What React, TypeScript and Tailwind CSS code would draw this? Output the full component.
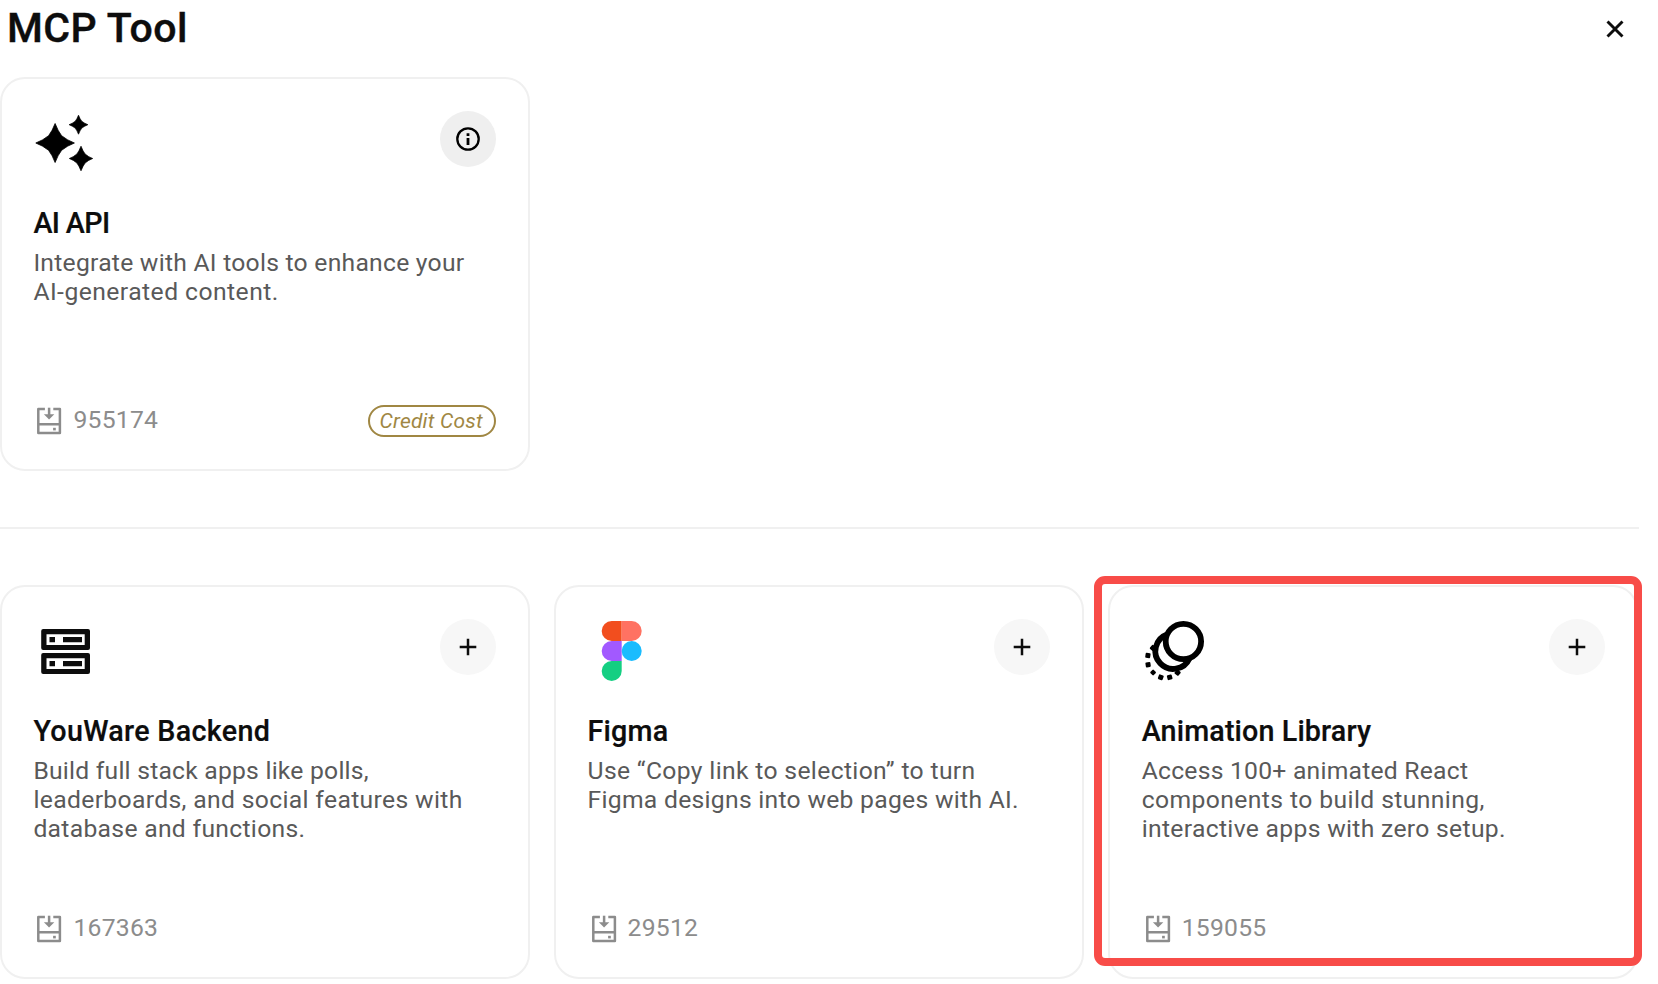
import type { ReactNode } from "react";

function SparklesIcon() {
  return (
    <svg width="64" height="64" viewBox="0 0 64 64" fill="#000">
      <g transform="translate(-0.300 0)">
        <path d="M22.400 11.500Q25.200 19 28.900 23.700Q34.500 28.300 41.700 31Q34.500 33.700 28.900 38.300Q25.200 43 22.400 50.500Q19.600 43 15.900 38.300Q10.300 33.700 3.100 31Q10.300 28.300 15.900 23.700Q19.600 19 22.400 11.500Z" strokeWidth="0.800" stroke="#000" />
        <path d="M45.800 3.200Q47.300 7 49.100 9.300Q51.800 11.400 55.200 12.700Q51.800 14 49.100 16.100Q47.300 18.400 45.800 22.200Q44.300 18.400 42.500 16.100Q39.800 14 36.400 12.700Q39.800 11.400 42.500 9.300Q44.300 7 45.800 3.200Z" strokeWidth="0.700" stroke="#000" />
        <path d="M48.300 34.200Q50.200 39 52.400 42Q55.700 44.900 60 46.500Q55.700 48.100 52.400 51Q50.200 54 48.300 58.800Q46.400 54 44.200 51Q40.900 48.100 36.600 46.500Q40.900 44.900 44.200 42Q46.400 39 48.300 34.200Z" strokeWidth="0.700" stroke="#000" />
      </g>
    </svg>
  );
}

function ServerIcon() {
  return (
    <svg width="64" height="64" viewBox="0 0 64 64" fill="#0d0d0d">
      <path fillRule="evenodd" d="M10.200 9H55a2 2 0 0 1 2 2V28a2 2 0 0 1-2 2H10.200a2 2 0 0 1-2-2V11a2 2 0 0 1 2-2ZM13.500 14.200V25H51.700V14.200Z" />
      <path fillRule="evenodd" d="M10.200 33H55a2 2 0 0 1 2 2V52a2 2 0 0 1-2 2H10.200a2 2 0 0 1-2-2V35a2 2 0 0 1 2-2ZM13.500 38.200V49H51.700V38.200Z" />
      <path d="M16.500 17H22V22.200H16.500ZM30 17H49V22.200H30ZM16.500 41H22V46.200H16.500ZM30 41H49V46.200H30Z" />
    </svg>
  );
}

function FigmaIcon() {
  return (
    <svg width="64" height="64" viewBox="0 0 64 64">
      <g transform="translate(1.200 0)">
        <path d="M22.500 1H32.500V21H22.500a10 10 0 0 1 0-20Z" fill="#F24E1E" />
        <path d="M32.500 1H42.500a10 10 0 0 1 0 20H32.500Z" fill="#FF7262" />
        <path d="M22.500 21H32.500V41H22.500a10 10 0 0 1 0-20Z" fill="#A259FF" />
        <circle cx="42.500" cy="31" r="10" fill="#1ABCFE" />
        <path d="M22.500 41H32.500V51a10 10 0 1 1-10-10Z" fill="#14CF82" />
      </g>
    </svg>
  );
}

function MotionIcon() {
  return (
    <svg width="64" height="64" viewBox="0 0 64 64" fill="none" stroke="#000">
      <g transform="translate(0.400 0)">
        <circle cx="41" cy="21.500" r="17.700" strokeWidth="5.800" />
        <path d="M24.500 14.500A17.800 17.800 0 1 0 47 38.500" strokeWidth="5.800" />
        <g fill="#000" stroke="none">
          <rect x="8" y="25.500" width="5" height="5" rx="1" transform="rotate(40 10.500 28)" />
          <rect x="3" y="33" width="5" height="5" rx="1" transform="rotate(8 5.500 35.500)" />
          <rect x="3.200" y="42.200" width="5" height="5" rx="1" transform="rotate(-8 5.700 44.700)" />
          <rect x="8.400" y="50.200" width="4.600" height="4.600" rx="1" transform="rotate(45 10.700 52.500)" />
          <rect x="15.900" y="54.800" width="5" height="5" rx="1" transform="rotate(20 18.400 57.300)" />
          <rect x="24.800" y="54.800" width="5" height="5" rx="1" transform="rotate(-15 27.300 57.300)" />
          <rect x="32.700" y="50.200" width="5" height="5" rx="1" transform="rotate(40 35.200 52.700)" />
        </g>
      </g>
    </svg>
  );
}

function InstallIcon() {
  return (
    <svg width="32" height="32" viewBox="0 0 32 32" fill="none" stroke="#8c8c8c" strokeWidth="2.500">
      <g transform="translate(-0.400 0)">
        <path d="M12.300 4.900H5.700V28.900H27.300V4.900H20.700M5.700 20.300H27.300" strokeLinejoin="round" />
        <path d="M16.500 3.700V11" />
        <path d="M11.300 10.200H21.700L16.500 15.500Z" fill="#8c8c8c" stroke="none" />
        <path d="M20.500 23.800H23.200V26.400H20.500Z" fill="#8c8c8c" stroke="none" />
      </g>
    </svg>
  );
}

function InfoIcon() {
  return (
    <svg width="28" height="28" viewBox="0 0 28 28" fill="none" stroke="#000">
      <circle cx="14" cy="14" r="10.700" strokeWidth="2.300" />
      <path d="M14 13V20M14 8.300V11" strokeWidth="2.800" />
    </svg>
  );
}

function PlusIcon() {
  return (
    <svg width="28" height="28" viewBox="0 0 28 28" fill="none" stroke="#0d0d0d" strokeWidth="2.500">
      <path d="M14 5.700V22.300M5.700 14H22.300" />
    </svg>
  );
}

type Line = { text: string; tracking: string };

type Tool = {
  name: string;
  nameTracking: string;
  lines: Line[];
  installs: string;
  icon: ReactNode;
  info?: boolean;
  marked?: boolean;
};

const aiApi: Tool = {
  name: "AI API",
  nameTracking: "tracking-[-0.600px]",
  lines: [
    { text: "Integrate with AI tools to enhance your", tracking: "tracking-[0.250px]" },
    { text: "AI-generated content.", tracking: "tracking-[0.450px]" },
  ],
  installs: "955174",
  icon: <SparklesIcon />,
  info: true,
};

const tools: Tool[] = [
  {
    name: "YouWare Backend",
    nameTracking: "tracking-[0.310px]",
    lines: [
      { text: "Build full stack apps like polls,", tracking: "tracking-[0.220px]" },
      { text: "leaderboards, and social features with", tracking: "tracking-[0.340px]" },
      { text: "database and functions.", tracking: "tracking-[0.300px]" },
    ],
    installs: "167363",
    icon: <ServerIcon />,
  },
  {
    name: "Figma",
    nameTracking: "tracking-[0.200px]",
    lines: [
      { text: "Use “Copy link to selection” to turn", tracking: "tracking-[0.340px]" },
      { text: "Figma designs into web pages with AI.", tracking: "tracking-[0.280px]" },
    ],
    installs: "29512",
    icon: <FigmaIcon />,
  },
  {
    name: "Animation Library",
    nameTracking: "tracking-[0.130px]",
    lines: [
      { text: "Access 100+ animated React", tracking: "tracking-[0.230px]" },
      { text: "components to build stunning,", tracking: "tracking-[0.400px]" },
      { text: "interactive apps with zero setup.", tracking: "tracking-[0.310px]" },
    ],
    installs: "159055",
    icon: <MotionIcon />,
    marked: true,
  },
];

function ToolCard({ tool }: { tool: Tool }) {
  return (
    <article className="relative flex h-[394px] flex-col rounded-[25px] border-2 border-[#f0f0f0] pt-8 pr-[31.5px] pb-[33px] pl-[31.4px]">
      <div className="flex h-[65px] items-start justify-between">
        <div className="pt-px">{tool.icon}</div>
        <button
          aria-label={tool.info ? "Details" : "Add"}
          className={`flex size-14 items-center justify-center rounded-full ${tool.info ? "bg-[#efefef]" : "bg-[#f7f7f7]"}`}
        >
          {tool.info ? <InfoIcon /> : <PlusIcon />}
        </button>
      </div>
      <h2
        className={`mt-[29px] text-[28.7px] leading-9 font-medium text-[#0d0d0d] [-webkit-text-stroke:0.2px_#0d0d0d] ${tool.nameTracking}`}
      >
        {tool.name}
      </h2>
      <p className="mt-[7px] text-[24.7px] leading-[29px] whitespace-nowrap text-[#595959]">
        {tool.lines.map((line) => (
          <span key={line.text} className={`block ${line.tracking}`}>
            {line.text}
          </span>
        ))}
      </p>
      <footer className="mt-auto flex h-8 items-center justify-between">
        <div className="flex items-center gap-2 text-[24.7px] tracking-[0.250px] text-[#8c8c8c]">
          <InstallIcon />
          <span>{tool.installs}</span>
        </div>
        {tool.info && (
          <span className="mt-[2px] flex h-8 w-32 shrink-0 items-center justify-center rounded-full border-2 border-[#a08743] pt-[2px] pr-[2px] text-[21px] tracking-[0.200px] whitespace-nowrap text-[#a08743] italic">
            Credit Cost
          </span>
        )}
      </footer>
      {tool.marked && (
        <div className="pointer-events-none absolute -top-[11px] -left-[16.3px] h-[390px] w-[548px] rounded-[11px] border-8 border-[#f84c48]" />
      )}
    </article>
  );
}

export default function App() {
  return (
    <main className="h-[984px] w-full overflow-hidden bg-white font-['Roboto',sans-serif]">
      <header className="flex h-[77px] items-start justify-between pr-[34px] pl-[7px]">
        <h1 className="pt-[4px] text-[41px] leading-[48px] font-medium tracking-[0.450px] text-[#0d0d0d] [-webkit-text-stroke:0.4px_#0d0d0d]">
          MCP Tool
        </h1>
        <button aria-label="Close" className="mt-[20px]">
          <svg width="18" height="18" viewBox="0 0 18 18" fill="none" stroke="#0d0d0d" strokeWidth="2.900">
            <path d="M1.500 1.500L16.500 16.500M16.500 1.500L1.500 16.500" />
          </svg>
        </button>
      </header>
      <div className="w-[1638px]">
        <section className="grid grid-cols-3 gap-[24.5px]">
          <ToolCard tool={aiApi} />
        </section>
        <hr className="-mr-px mt-14 border-t-2 border-[#f0f0f0]" />
        <section className="mt-14 grid grid-cols-3 gap-[24.5px]">
          {tools.map((tool) => (
            <ToolCard key={tool.name} tool={tool} />
          ))}
        </section>
      </div>
    </main>
  );
}
